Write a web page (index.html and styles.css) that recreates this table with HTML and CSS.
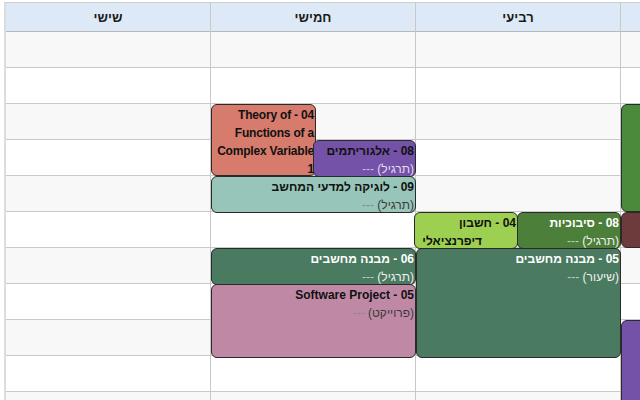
FILE: index.html
```html
<!DOCTYPE html>
<html lang="he">
<head>
<meta charset="utf-8">
<title>מערכת שעות</title>
<link rel="stylesheet" href="styles.css">
</head>
<body>
<div class="wrap">
  <div class="table">
    <div class="day">
      <div class="day-head">שישי</div>
      <div class="day-body">
        <div class="slot odd"></div><div class="slot"></div><div class="slot odd"></div><div class="slot"></div><div class="slot odd"></div><div class="slot"></div><div class="slot odd"></div><div class="slot"></div><div class="slot odd"></div><div class="slot"></div><div class="slot odd"></div>
      </div>
    </div>
    <div class="day">
      <div class="day-head">חמישי</div>
      <div class="day-body">
        <div class="slot odd"></div><div class="slot"></div><div class="slot odd"></div><div class="slot"></div><div class="slot odd"></div><div class="slot"></div><div class="slot odd"></div><div class="slot"></div><div class="slot odd"></div><div class="slot"></div><div class="slot odd"></div>
        <div class="ev c-salmon" style="top:72px;height:72px;left:0;width:105px">
          <div class="title">04 - Theory of Functions of a Complex Variable 1</div>
        </div>
        <div class="ev c-purple" style="top:108px;height:37px;left:102px;right:-1px">
          <div class="title">08 - אלגוריתמים</div>
          <div class="sub"><span class="type">(תרגיל)</span> <span class="dash">---</span></div>
        </div>
        <div class="ev c-teal" style="top:144px;height:37px;left:0;right:-1px">
          <div class="title">09 - לוגיקה למדעי המחשב</div>
          <div class="sub"><span class="type">(תרגיל)</span> <span class="dash">---</span></div>
        </div>
        <div class="ev c-forest dark" style="top:216px;height:37px;left:0;right:-1px">
          <div class="title">06 - מבנה מחשבים</div>
          <div class="sub"><span class="type">(תרגיל)</span> <span class="dash">---</span></div>
        </div>
        <div class="ev c-pink" style="top:252px;height:74px;left:0;right:-1px">
          <div class="title">05 - Software Project</div>
          <div class="sub"><span class="type">(פרוייקט)</span> <span class="dash">---</span></div>
        </div>
      </div>
    </div>
    <div class="day">
      <div class="day-head">רביעי</div>
      <div class="day-body">
        <div class="slot odd"></div><div class="slot"></div><div class="slot odd"></div><div class="slot"></div><div class="slot odd"></div><div class="slot"></div><div class="slot odd"></div><div class="slot"></div><div class="slot odd"></div><div class="slot"></div><div class="slot odd"></div>
        <div class="ev c-lime" style="top:180px;height:37px;left:-2px;width:104px">
          <div class="title">04 - חשבון<span class="wrapped">דיפרנציאלי</span></div>
        </div>
        <div class="ev c-green dark" style="top:180px;height:37px;left:101px;right:-1px">
          <div class="title">08 - סיבוכיות</div>
          <div class="sub"><span class="type">(תרגיל)</span> <span class="dash">---</span></div>
        </div>
        <div class="ev c-forest dark" style="top:216px;height:110px;left:0;right:-1px">
          <div class="title">05 - מבנה מחשבים</div>
          <div class="sub"><span class="type">(שיעור)</span> <span class="dash">---</span></div>
        </div>
      </div>
    </div>
    <div class="day">
      <div class="day-head"></div>
      <div class="day-body">
        <div class="slot odd"></div><div class="slot"></div><div class="slot odd"></div><div class="slot"></div><div class="slot odd"></div><div class="slot"></div><div class="slot odd"></div><div class="slot"></div><div class="slot odd"></div><div class="slot"></div><div class="slot odd"></div>
        <div class="ev c-leaf dark" style="top:72px;height:108px;left:0;right:0"></div>
        <div class="ev c-maroon dark" style="top:180px;height:36px;left:0;right:0"></div>
        <div class="ev c-purple" style="top:288px;height:120px;left:0;right:0"></div>
      </div>
    </div>
  </div>
</div>
</body>
</html>
```
FILE: styles.css
```css
* { box-sizing: border-box; }

html, body {
  margin: 0;
  padding: 0;
  background: #ffffff;
  width: 640px;
  height: 400px;
  overflow: hidden;
}

body {
  font-family: "Liberation Sans", "DejaVu Sans", Arial, sans-serif;
  color: #111;
}

.wrap {
  margin: 2px 0 0 4px;
  width: 636px;
  height: 398px;
  overflow: hidden;
  border-top: 1px solid #cfcfcf;
  border-left: 2px solid #dcdcdc;
}

.table {
  display: grid;
  grid-template-columns: repeat(4, 205px);
  width: 820px;
}

.day {
  border-right: 1px solid #c8c8c8;
  display: flex;
  flex-direction: column;
}

.day-head {
  height: 29px;
  background: #dde9f6;
  border-bottom: 1px solid #b9b9b9;
  display: flex;
  align-items: center;
  justify-content: center;
  font-weight: bold;
  font-size: 13px;
  direction: rtl;
  color: #1a1a1a;
}

.day-body {
  position: relative;
}

.slot {
  height: 36px;
  border-bottom: 1px solid #c9c9c9;
  background: #ffffff;
}

.slot.odd {
  background: #f8f8f8;
}

.ev {
  position: absolute;
  border: 1px solid #2a2a2a;
  border-radius: 6px;
  overflow: hidden;
  padding: 1px 1px 0 0;
  direction: rtl;
  text-align: right;
  font-size: 12px;
  line-height: 18px;
  color: #111;
  z-index: 1;
}

.ev .title {
  font-weight: bold;
}

.c-salmon .title {
  letter-spacing: -0.2px;
}

.ev .sub {
  font-weight: normal;
}

.ev .type { color: #3a3a3a; }
.ev .dash { color: #8a8a8a; }

.ev.dark { color: #ffffff; }
.ev.dark .type { color: #f0f0f0; }
.ev.dark .dash { color: #c8c8c8; }

.c-purple .type { color: #e4dcef; }
.c-purple .dash { color: #c9bde0; }

.wrapped {
  display: block;
  padding-right: 34px;
  white-space: nowrap;
}

.c-salmon { background: #d77b6d; }
.c-purple { background: #7352a8; }
.c-teal   { background: #97c5b9; }
.c-lime   { background: #9dd051; }
.c-green  { background: #4b7f3a; }
.c-forest { background: #4a7a5f; }
.c-pink   { background: #bf89a5; }
.c-leaf   { background: #4c8a3b; }
.c-maroon { background: #6d3b3b; }
```
